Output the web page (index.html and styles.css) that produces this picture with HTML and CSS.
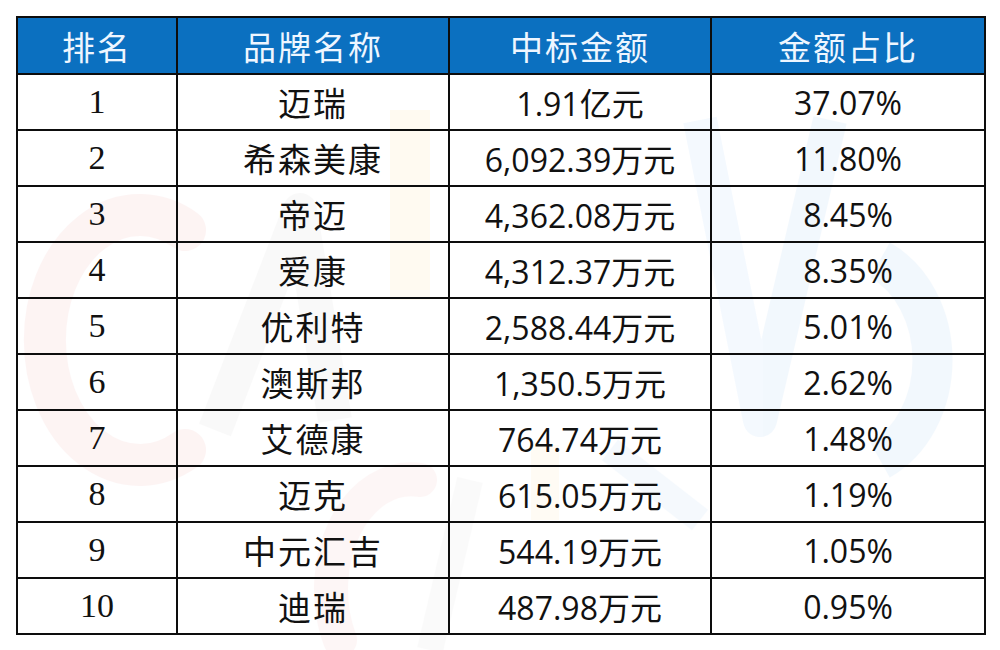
FILE: index.html
```html
<!DOCTYPE html>
<html lang="zh-CN">
<head>
<meta charset="utf-8">
<title>品牌中标金额排名</title>
<link rel="stylesheet" href="styles.css">
</head>
<body>
<div class="page">
  <svg class="watermark" width="1000" height="650" viewBox="0 0 1000 650" aria-hidden="true">
    <g class="wm-top">
      <path d="M185 230 A 95 125 0 1 0 185 450" fill="none" stroke="#e53935" stroke-width="42" stroke-linecap="round"/>
      <path d="M215 430 L300 210 L335 420" fill="none" stroke="#9a9a9a" stroke-width="34" stroke-linejoin="round"/>
      <path d="M410 110 L410 300" fill="none" stroke="#ffb300" stroke-width="40"/>
      <path d="M700 120 L760 420 L830 120" fill="none" stroke="#1e88e5" stroke-width="34" stroke-linejoin="round"/>
      <path d="M880 260 A 90 110 0 0 1 880 460" fill="none" stroke="#1e88e5" stroke-width="40"/>
    </g>
    <g class="wm-bottom">
      <path d="M420 480 A 80 110 0 0 0 340 640" fill="none" stroke="#e53935" stroke-width="34" stroke-linecap="round"/>
      <path d="M470 480 L430 650" fill="none" stroke="#9a9a9a" stroke-width="26"/>
      <path d="M545 445 L545 520" fill="none" stroke="#ffb300" stroke-width="28"/>
      <path d="M610 450 L700 520" fill="none" stroke="#1e88e5" stroke-width="26"/>
    </g>
  </svg>
  <table class="rank">
    <colgroup>
      <col class="c-rank"><col class="c-brand"><col class="c-amount"><col class="c-share">
    </colgroup>
    <thead>
      <tr><th>排名</th><th>品牌名称</th><th>中标金额</th><th>金额占比</th></tr>
    </thead>
    <tbody>
      <tr><td class="num">1</td><td class="brand">迈瑞</td><td class="val">1.91亿元</td><td class="val">37.07%</td></tr>
      <tr><td class="num">2</td><td class="brand">希森美康</td><td class="val">6,092.39万元</td><td class="val">11.80%</td></tr>
      <tr><td class="num">3</td><td class="brand">帝迈</td><td class="val">4,362.08万元</td><td class="val">8.45%</td></tr>
      <tr><td class="num">4</td><td class="brand">爱康</td><td class="val">4,312.37万元</td><td class="val">8.35%</td></tr>
      <tr><td class="num">5</td><td class="brand">优利特</td><td class="val">2,588.44万元</td><td class="val">5.01%</td></tr>
      <tr><td class="num">6</td><td class="brand">澳斯邦</td><td class="val">1,350.5万元</td><td class="val">2.62%</td></tr>
      <tr><td class="num">7</td><td class="brand">艾德康</td><td class="val">764.74万元</td><td class="val">1.48%</td></tr>
      <tr><td class="num">8</td><td class="brand">迈克</td><td class="val">615.05万元</td><td class="val">1.19%</td></tr>
      <tr><td class="num">9</td><td class="brand">中元汇吉</td><td class="val">544.19万元</td><td class="val">1.05%</td></tr>
      <tr><td class="num">10</td><td class="brand">迪瑞</td><td class="val">487.98万元</td><td class="val">0.95%</td></tr>
    </tbody>
  </table>
</div>
</body>
</html>
```
FILE: styles.css
```css
html, body {
  margin: 0;
  padding: 0;
  background: #ffffff;
}

.page {
  position: relative;
  width: 1000px;
  height: 650px;
  padding: 16px 0 0 16px;
  box-sizing: border-box;
  overflow: hidden;
}

.watermark {
  position: absolute;
  left: 0;
  top: 0;
  pointer-events: none;
}

.wm-top { opacity: 0.05; }
.wm-bottom { opacity: 0.04; }

.rank {
  position: relative;
  border-collapse: collapse;
  table-layout: fixed;
  width: 968px;
  color: #111111;
  background: transparent;
}

.c-rank { width: 160px; }
.c-brand { width: 272px; }
.c-amount { width: 262px; }
.c-share { width: 274px; }

.rank th,
.rank td {
  border: 2px solid #0d0d0d;
  padding: 0;
  text-align: center;
  vertical-align: middle;
  white-space: nowrap;
}

.rank thead tr { height: 57px; }
.rank tbody tr { height: 56px; }

.rank th {
  background: #0b70c0;
  color: #eef6ff;
  font-family: "Noto Sans CJK SC", sans-serif;
  font-weight: 400;
  font-size: 33px;
  letter-spacing: 2px;
}

.rank td.num {
  font-family: "Liberation Serif", serif;
  font-size: 34px;
}

.rank td.brand {
  font-family: "Liberation Serif", "Noto Sans CJK SC", serif;
  font-size: 33px;
  letter-spacing: 2px;
}

.rank td.val {
  font-family: "Open Sans", "Noto Sans CJK SC", sans-serif;
  font-size: 32px;
}
```
